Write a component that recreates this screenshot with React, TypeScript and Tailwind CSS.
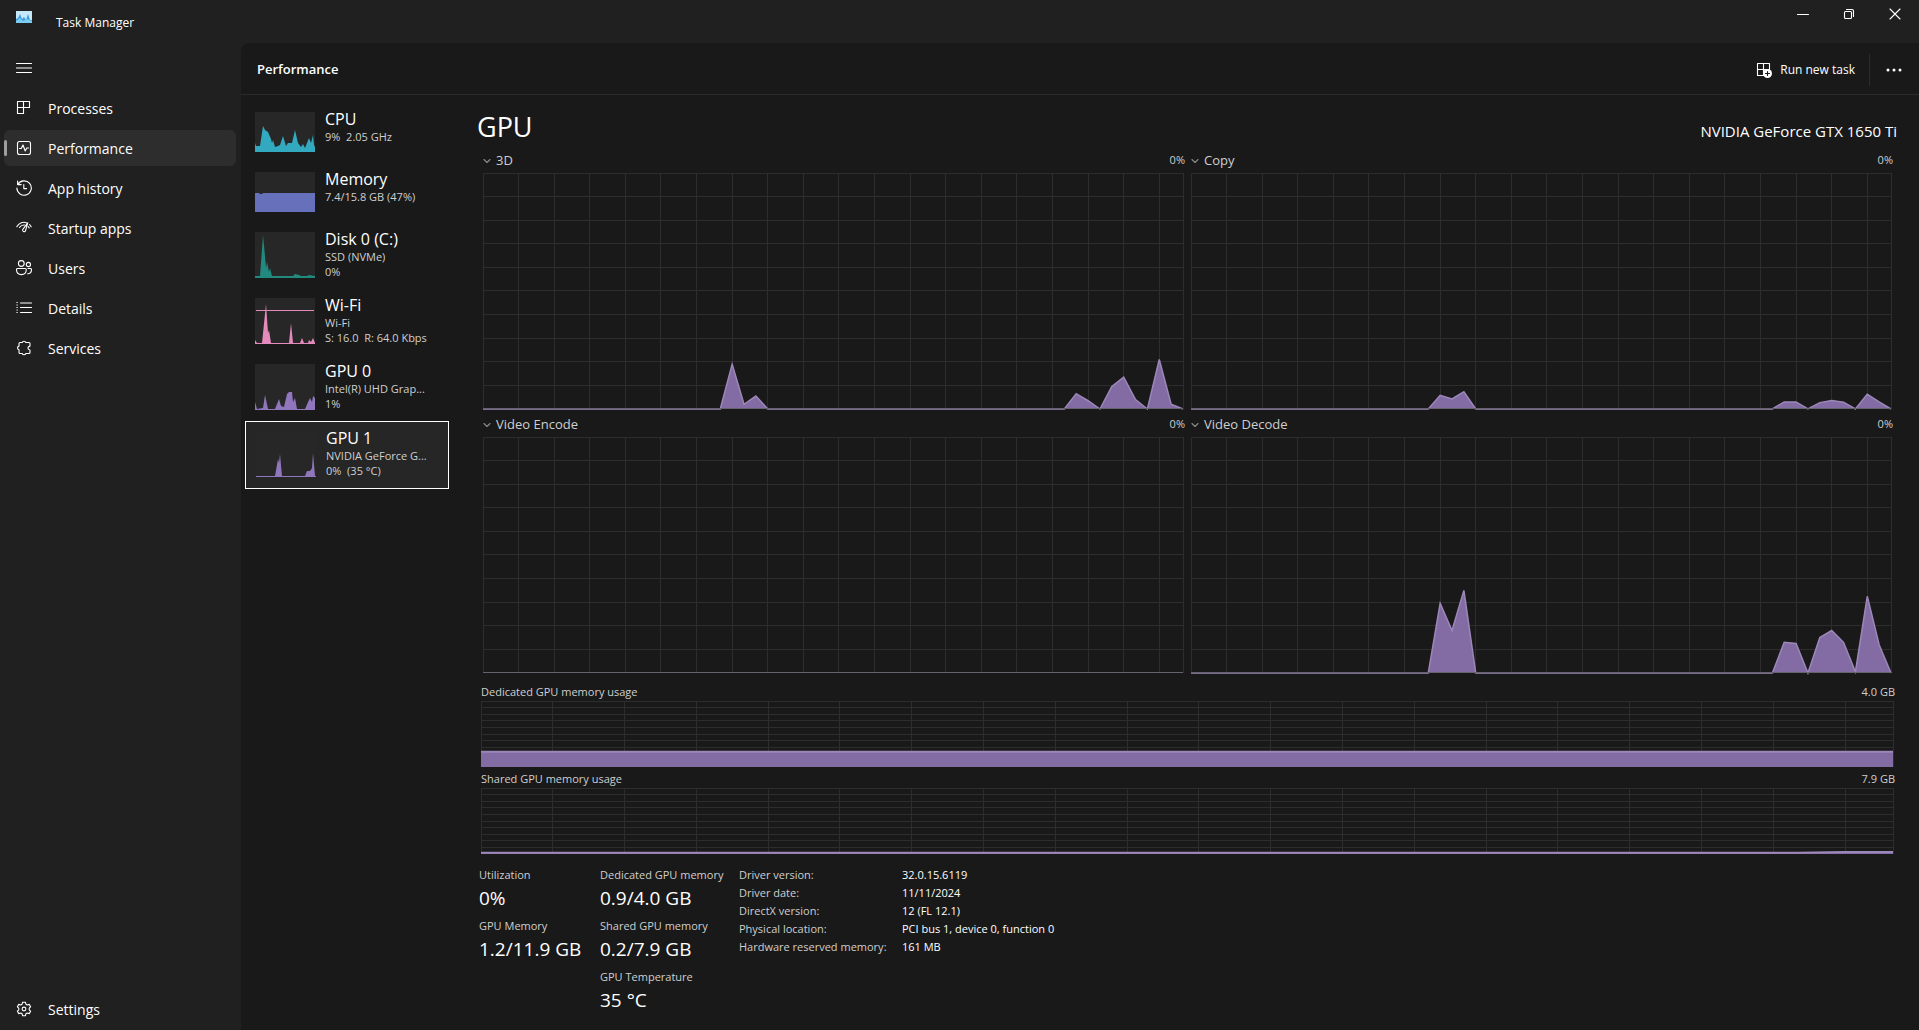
import type { ReactNode } from 'react';

const stroke = {
  fill: 'none',
  stroke: 'currentColor',
  strokeWidth: 1.1,
  strokeLinecap: 'round',
  strokeLinejoin: 'round',
} as const;

function Icon({ children }: { children: ReactNode }) {
  return (
    <svg className="h-4 w-4 shrink-0" viewBox="0 0 16 16" aria-hidden="true" {...stroke}>
      {children}
    </svg>
  );
}

const navItems = [
  {
    label: 'Processes',
    icon: <path d="M1.5 1.5h12v6h-6v6h-6zM7.5 1.500v6M1.5 7.500h6" />,
  },
  {
    label: 'Performance',
    icon: (
      <>
        <rect x="1.5" y="1.5" width="13" height="13" rx="2" />
        <path d="M3.5 8.5h1.7L7 5l2.2 6 1.6-3h1.7" />
      </>
    ),
  },
  {
    label: 'App history',
    icon: <path d="M1.6 1v3.6h3.600M1.900 4.400A7.200 7.200 0 1 1 .9 8.100M7.800 4.600v4h2.800" />,
  },
  {
    label: 'Startup apps',
    icon: (
      <>
        <path d="M.8 6.800C2.800 2.600 7.400 1.300 10.800 3M3.500 7.500C5 5.200 7 4.800 8.600 5M13.600 4.600l1.600 2.200M12.200 6.500l1 1.400" />
        <path d="M11.800 2.800 7 9.200a1.500 1.500 0 1 0 2.600 1.200z" />
      </>
    ),
  },
  {
    label: 'Users',
    icon: (
      <>
        <circle cx="5.300" cy="3.500" r="2.900" />
        <circle cx="12.400" cy="4.500" r="2.100" />
        <path d="M1.600 8.500h7.600c.7 0 1.100.4 1.100 1.100 0 3.200-1.800 5-4.900 5S.5 12.800.5 9.600c0-.7.4-1.100 1.100-1.100zM12 8.500h2.400c.7 0 1.100.4 1.100 1.100 0 2.800-1.400 4.200-3.800 4.200" />
      </>
    ),
  },
  {
    label: 'Details',
    icon: <path d="M4.500 3h11M4.500 7.500h11M4.500 12.500h11M.9 2.500h.4M.9 5h.4M.9 7.500h.4M.9 10h.4M.9 12.500h.4" />,
  },
  {
    label: 'Services',
    icon: (
      <path d="M4 2.500h2.200a1.900 1.900 0 0 1 3.600 0H13c.6 0 1 .4 1 1v2.300a.6.6 0 0 1-.7.6 1.700 1.700 0 0 0 0 3.300.6.6 0 0 1 .7.6v2.200c0 .6-.4 1-1 1H9.800a1.900 1.900 0 0 1-3.600 0H4c-.6 0-1-.4-1-1v-2.700a1.900 1.900 0 0 1 0-3.700V3.500c0-.6.4-1 1-1z" />
    ),
  },
];

type Resource = {
  name: string;
  lines: string[];
  height: number;
  color: string;
  points: string;
  rule?: number;
};

const resources: Resource[] = [
  {
    name: 'CPU',
    lines: ['9%  2.05 GHz'],
    height: 40,
    color: '#33a9bf',
    points:
      '0,31 1,34 5,34 8,14 10,18 13,20 16,27 17,31 18,28 20,35 23,34 25,33 28,24 31,34 33,31 37,31 40,18 43,31 46,35 48,32 50,36 54,26 56,31 58,23 59,33 60,35',
  },
  {
    name: 'Memory',
    lines: ['7.4/15.8 GB (47%)'],
    height: 40,
    color: '#6670bb',
    points: '0,21 4,21 5,22 7,22 8,21 60,21',
  },
  {
    name: 'Disk 0 (C:)',
    lines: ['SSD (NVMe)', '0%'],
    height: 46,
    color: '#21897e',
    points:
      '0,44 5,44 8,3 10,24 11,36 12,30 14,40 15,36 17,44 38,44 40,42 44,43 46,44 52,44 54,43 60,44',
  },
  {
    name: 'Wi-Fi',
    lines: ['Wi-Fi', 'S: 16.0  R: 64.0 Kbps'],
    height: 46,
    color: '#e58abd',
    rule: 12,
    points:
      '0,42 2,45 7,45 11,6 13,35 14,32 16,45 34,45 36,25 38,45 45,45 47,40 49,45 53,45 54,42 56,44 58,40 60,45',
  },
  {
    name: 'GPU 0',
    lines: ['Intel(R) UHD Grap...', '1%'],
    height: 46,
    color: '#9077bd',
    points:
      '0,38 2,45 8,44 10,31 13,45 20,45 24,35 26,42 29,43 32,30 34,28 37,28 38,38 40,34 42,45 50,45 54,36 55,34 57,38 58,32 60,34',
  },
  {
    name: 'GPU 1',
    lines: ['NVIDIA GeForce G...', '0%  (35 °C)'],
    height: 46,
    color: '#9077bd',
    points: '0,45 19,45 22,28 23,32 24,23 26,45 49,45 51,40 54,40 56,37 57,22 59,45 60,45',
  },
];

// Samples are [second, percent]; everything else is zero.
type Sample = [number, number];

const engines: { name: string; samples: Sample[] }[] = [
  {
    name: '3D',
    samples: [
      [20, 0], [21, 19], [22, 2], [23, 5.5], [24, 0],
      [49, 0], [50, 6.5], [51, 3.5], [52, 0], [53, 9.5], [54, 13.5], [55, 4], [56, 0], [57, 21], [58, 2],
    ],
  },
  {
    name: 'Copy',
    samples: [
      [20, 0], [21, 5.8], [22, 4.3], [23, 7.3], [24, 0],
      [49, 0], [50, 3], [51, 3], [52, 0], [53, 2.7], [54, 3.6], [55, 2.9], [56, 0], [57, 6.3], [58, 3],
    ],
  },
  { name: 'Video Encode', samples: [] },
  {
    name: 'Video Decode',
    samples: [
      [20, 0], [21, 29.5], [22, 18], [23, 35], [24, 0],
      [49, 0], [50, 13], [51, 12.5], [52, 0], [53, 15], [54, 18], [55, 13], [56, 0.5], [57, 32.5], [58, 12],
    ],
  },
];

const memoryGraphs: { name: string; max: string; samples: Sample[]; start: number; end: number }[] = [
  { name: 'Dedicated GPU memory usage', max: '4.0 GB', samples: [], start: 23, end: 23 },
  { name: 'Shared GPU memory usage', max: '7.9 GB', samples: [[55, 2], [57, 3]], start: 2, end: 3 },
];

const stats = [
  [
    ['Utilization', '0%'],
    ['GPU Memory', '1.2/11.9 GB'],
  ],
  [
    ['Dedicated GPU memory', '0.9/4.0 GB'],
    ['Shared GPU memory', '0.2/7.9 GB'],
    ['GPU Temperature', '35 °C'],
  ],
];

const details = [
  ['Driver version:', '32.0.15.6119'],
  ['Driver date:', '11/11/2024'],
  ['DirectX version:', '12 (FL 12.1)'],
  ['Physical location:', 'PCI bus 1, device 0, function 0'],
  ['Hardware reserved memory:', '161 MB'],
];

const columns = [...Array.from({ length: 20 }, (_, i) => i * 3), 59];
const rows = Array.from({ length: 10 }, (_, i) => i * 10);

function Graph({
  samples,
  start = 0,
  end = 0,
  className,
}: {
  samples: Sample[];
  start?: number;
  end?: number;
  className: string;
}) {
  const line = [[0, start], ...samples, [59, end]].map(([x, y]) => `${x},${100 - y}`).join(' ');
  return (
    <svg className={`block w-full overflow-visible ${className}`} viewBox="0 0 59 100" preserveAspectRatio="none" aria-hidden="true">
      <g stroke="#2d2d2d" shapeRendering="crispEdges">
        {columns.map((x) => (
          <line key={x} x1={x} x2={x} y1="0" y2="100" vectorEffect="non-scaling-stroke" />
        ))}
        {rows.map((y) => (
          <line key={y} x1="0" x2="59" y1={y} y2={y} vectorEffect="non-scaling-stroke" />
        ))}
      </g>
      <polygon points={`0,100 ${line} 59,100`} fill="#836ba4" />
      {(samples.length > 0 || start > 0) && (
        <polyline
          points={line}
          fill="none"
          stroke="#9c87b9"
          strokeWidth={start > 0 ? 2 : 1.5}
          vectorEffect="non-scaling-stroke"
        />
      )}
      {start === 0 && (
        <line x1="0" x2="59" y1="100" y2="100" stroke="#67626e" vectorEffect="non-scaling-stroke" shapeRendering="crispEdges" />
      )}
    </svg>
  );
}

function TitleBar() {
  return (
    <header className="flex h-[43px] items-start">
      <svg className="mt-[11px] ml-4 h-3 w-4" viewBox="0 0 16 12" aria-hidden="true">
        <rect width="16" height="12" fill="#c4e8f8" />
        <path d="M0 12V8l2-1 2-4 2 5 2-2 2 3 2-6 2 6h2v3z" fill="#3f9fdb" />
        <path d="M0 12v-2l4-3 3 3 4-2 5 2v2z" fill="#7ccbf0" />
      </svg>
      <h1 className="mt-[14px] ml-6 text-xs leading-[18px]">Task Manager</h1>
      <div className="mr-px ml-auto flex">
        <button type="button" aria-label="Minimize" className="flex h-7 w-[46px] items-center justify-center">
          <svg className="h-3 w-3" viewBox="0 0 12 12" {...stroke}>
            <path d="M.5 6.500h11" />
          </svg>
        </button>
        <button type="button" aria-label="Restore" className="flex h-7 w-[46px] items-center justify-center">
          <svg className="h-3 w-3" viewBox="0 0 12 12" {...stroke}>
            <rect x="1.500" y="3.500" width="7" height="7" rx="1" />
            <path d="M3.500 1.500h5.500a1.500 1.500 0 0 1 1.500 1.500v5.500" />
          </svg>
        </button>
        <button type="button" aria-label="Close" className="flex h-7 w-[46px] items-center justify-center">
          <svg className="h-3 w-3" viewBox="0 0 12 12" {...stroke}>
            <path d="M1 1l10 10M11 1 1 11" />
          </svg>
        </button>
      </div>
    </header>
  );
}

function Sidebar() {
  return (
    <nav className="flex w-[241px] shrink-0 flex-col gap-1 pt-[7px] pr-[5px] pb-[3px] pl-1">
      <button type="button" aria-label="Open navigation" className="flex h-9 items-center pl-3">
        <Icon>
          <path d="M.5 3.500h15M.5 8h15M.5 12.500h15" />
        </Icon>
      </button>
      {navItems.map((item) => {
        const active = item.label === 'Performance';
        return (
          <a
            key={item.label}
            href="#"
            className={`flex h-9 items-center rounded-md text-sm ${active ? 'bg-[#2d2d2d]' : ''}`}
          >
            <span className={`mr-[9px] h-4 w-[3px] rounded-sm ${active ? 'bg-[#9e9e9e]' : ''}`} />
            <Icon>{item.icon}</Icon>
            <span className="ml-4 pt-[2px]">{item.label}</span>
          </a>
        );
      })}
      <a href="#" className="mt-auto flex h-9 items-center rounded-md pl-3 text-sm">
        <Icon>
          <path d="M6.600 1.200h2.800l.5 2 1.300.8 2-.6 1.400 2.400L13.200 7.200v1.600l1.400 1.400-1.400 2.400-2-.6-1.300.8-.5 2H6.600l-.5-2-1.300-.8-2 .6-1.400-2.400 1.400-1.400V7.200L1.400 5.800l1.400-2.400 2 .6 1.300-.8z" />
          <circle cx="8" cy="8" r="1.900" />
        </Icon>
        <span className="ml-4 pt-[2px]">Settings</span>
      </a>
    </nav>
  );
}

function ResourceList() {
  return (
    <div className="flex w-[208px] shrink-0 flex-col pt-2 pl-1">
      {resources.map((r) => {
        const selected = r.name === 'GPU 1';
        return (
          <button
            key={r.name}
            type="button"
            className={`flex items-start px-[10px] pt-[9px] text-left ${
              selected ? 'h-[68px] border border-white bg-[#262626]' : r.height === 40 ? 'h-[60px]' : 'h-[66px]'
            }`}
          >
            <svg
              className={`w-[60px] shrink-0 bg-[#272727] ${r.height === 40 ? 'h-10' : 'h-[46px]'}`}
              viewBox={`0 0 60 ${r.height}`}
              aria-hidden="true"
            >
              <polygon points={`0,${r.height} ${r.points} 60,${r.height}`} fill={r.color} />
              {r.rule && <path d={`M1 ${r.rule}.5h58`} stroke={r.color} />}
            </svg>
            <span className="ml-[10px] flex min-w-0 flex-col text-[11px] leading-[15px] whitespace-pre text-[#cfcfcf]">
              <span className="mb-[3px] text-base leading-[14px] text-white">{r.name}</span>
              {r.lines.map((l) => (
                <span key={l}>{l}</span>
              ))}
            </span>
          </button>
        );
      })}
    </div>
  );
}

function EngineGraph({ name, samples }: { name: string; samples: Sample[] }) {
  return (
    <div>
      <div className="-mr-[2px] flex h-[26px] items-center pt-px text-[#cfcfcf]">
        <button type="button" className="flex items-center gap-[5px] text-[13px]">
          <svg className="h-2 w-2" viewBox="0 0 8 8" aria-hidden="true" {...stroke} stroke="#8a8a8a">
            <path d="M1 2.500l3 3 3-3" />
          </svg>
          {name}
        </button>
        <span className="ml-auto text-[11px]">0%</span>
      </div>
      <Graph samples={samples} className="h-[236px]" />
    </div>
  );
}

export default function App() {
  return (
    <div className="flex min-h-screen flex-col bg-[#202020] font-['Open_Sans','Noto_Sans',sans-serif] text-white">
      <TitleBar />

      <div className="flex flex-1">
        <Sidebar />

        <main className="flex min-w-0 flex-1 flex-col rounded-tl-lg bg-[#191919]">
          {/* Command bar */}
          <div className="flex h-[52px] items-center border-b border-[#2b2b2b] pt-[2px] pl-4 text-xs">
            <h2 className="text-[13px] font-semibold">Performance</h2>
            <button type="button" className="ml-auto flex items-center gap-2">
              <Icon>
                <path d="M1.500 1.500h12v6M7.500 1.500v12h-6v-12M1.500 7.500h12" />
                <circle cx="11.500" cy="11.500" r="4.500" fill="#fff" stroke="none" />
                <path d="M11.500 9.500v4M9.500 11.500h4" stroke="#191919" />
              </Icon>
              Run new task
            </button>
            <span className="ml-[14px] h-8 w-px bg-[#2b2b2b]" />
            <button type="button" aria-label="More options" className="mr-[17px] ml-4">
              <svg className="h-4 w-4" viewBox="0 0 16 16" fill="currentColor">
                <circle cx="2" cy="8" r="1.500" />
                <circle cx="8" cy="8" r="1.500" />
                <circle cx="14" cy="8" r="1.500" />
              </svg>
            </button>
          </div>

          <div className="flex flex-1">
            <ResourceList />

            <section className="min-w-0 flex-1 pt-[14px] pr-[22px] pl-7">
              <div className="flex items-end justify-between">
                <h2 className="text-[27px] leading-9">GPU</h2>
                <p className="text-[15px] leading-7">NVIDIA GeForce GTX 1650 Ti</p>
              </div>

              {/* Engine graphs */}
              <div className="mt-[2px] grid grid-cols-2 gap-x-2 gap-y-[2px] pr-[6px] pl-[6px]">
                {engines.map((e) => (
                  <EngineGraph key={e.name} {...e} />
                ))}
              </div>

              {/* Memory graphs */}
              <div className="mt-2 flex flex-col gap-px pr-1 pl-1">
                {memoryGraphs.map((m) => (
                  <div key={m.name}>
                    <div className="-mr-[2px] flex h-5 justify-between pt-[2px] text-[11px] leading-[18px] text-[#cfcfcf]">
                      <span>{m.name}</span>
                      <span>{m.max}</span>
                    </div>
                    <Graph samples={m.samples} start={m.start} end={m.end} className="h-[66px]" />
                  </div>
                ))}
              </div>

              {/* Statistics */}
              <div className="flex pt-3 pl-[2px]">
                {stats.map((column, i) => (
                  <dl key={i} className={i === 0 ? 'w-[121px]' : 'w-[139px]'}>
                    {column.map(([label, value]) => (
                      <div key={label} className="mb-[5px]">
                        <dt className="text-[11px] leading-[18px] whitespace-nowrap text-[#cfcfcf]">{label}</dt>
                        <dd className="text-[19px] leading-7 whitespace-nowrap">{value}</dd>
                      </div>
                    ))}
                  </dl>
                ))}
                <dl className="grid auto-rows-[18px] grid-cols-[163px_auto] text-[11px] leading-[18px]">
                  {details.map(([label, value]) => (
                    <div key={label} className="contents">
                      <dt className="text-[#cfcfcf]">{label}</dt>
                      <dd>{value}</dd>
                    </div>
                  ))}
                </dl>
              </div>
            </section>
          </div>
        </main>
      </div>
    </div>
  );
}
